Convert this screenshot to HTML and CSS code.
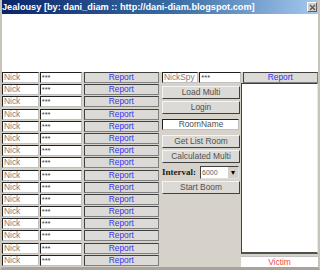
FILE: index.html
```html
<!DOCTYPE html>
<html lang="en">
<head>
    <meta charset="UTF-8">
    <title>Jealousy</title>
    <link rel="stylesheet" href="styles.css">
</head>
<body>
    <div class="window">
        <div class="titlebar">
            <span class="title">Jealousy [by: dani_diam :: http://dani-diam.blogspot.com]</span>
            <span class="close">
                <svg width="7" height="7" viewBox="0 0 7 7"><path d="M1 1L6 6M6 1L1 6" stroke="#555" stroke-width="1.2"/></svg>
            </span>
        </div>
        <div class="canvas"></div>

        <div class="main">
            <div class="accounts" id="accounts"></div>

            <div class="side">
                <div class="row">
                    <div class="field name spy">NickSpy</div>
                    <div class="field pass">***</div>
                    <div class="btn report">Report</div>
                </div>
                <div class="side-body">
                    <div class="controls">
                        <div class="btn cmd">Load Multi</div>
                        <div class="btn cmd">Login</div>
                        <div class="field room">RoomName</div>
                        <div class="btn cmd">Get List Room</div>
                        <div class="btn cmd">Calculated Multi</div>
                        <div class="interval">
                            <span class="interval-label">Interval:</span>
                            <div class="select">
                                <span class="select-value">6000</span>
                                <span class="select-arrow">&#9662;</span>
                            </div>
                        </div>
                        <div class="btn cmd">Start Boom</div>
                    </div>
                    <div class="victims">
                        <div class="list"></div>
                        <div class="victim">Victim</div>
                    </div>
                </div>
            </div>
        </div>
    </div>

    <script>
        const accounts = document.getElementById("accounts");
        for (let i = 0; i < 16; i++) {
            const row = document.createElement("div");
            row.className = "row";
            row.innerHTML = '<div class="field name">Nick</div>' +
                '<div class="field pass">***</div>' +
                '<div class="btn report">Report</div>';
            accounts.appendChild(row);
        }
    </script>
</body>
</html>
```

FILE: styles.css
```css
body {
    margin: 0;
    background: #fff;
    font-family: "Liberation Sans", Arial, sans-serif;
}
.window {
    width: 320px;
    height: 270px;
    box-sizing: border-box;
    border-left: 2px solid #c8c4bc;
    border-right: 2px solid #c8c4bc;
    border-bottom: 3px solid #a8a49c;
    background-color: #d6d2ca;
    background-image: radial-gradient(#eceae4 0.5px, transparent 0.7px);
    background-size: 2px 2px;
    overflow: hidden;
}
.titlebar {
    height: 14px;
    margin: 0 -2px;
    padding: 0 3px 0 2px;
    display: flex;
    align-items: center;
    justify-content: space-between;
    background: linear-gradient(to right, #0a246a 0%, #3a6ea5 55%, #a6caf0 100%);
}
.title {
    color: #fff;
    font-weight: bold;
    font-size: 9.2px;
    white-space: nowrap;
}
.close {
    display: flex;
    align-items: center;
    justify-content: center;
    box-sizing: border-box;
    width: 10px;
    height: 10px;
    background: #d4d0c8;
    border: 1px solid #fff;
    border-right-color: #606060;
    border-bottom-color: #606060;
}
.canvas {
    height: 58px;
    background: #fff;
}
.main {
    display: flex;
    gap: 3px;
}
.accounts {
    width: 157px;
    display: flex;
    flex-direction: column;
    gap: 1.2px;
}
.row {
    display: flex;
    height: 11px;
    gap: 1px;
}
.field {
    box-sizing: border-box;
    height: 11px;
    background: #fff;
    border-top: 1px solid #202020;
    border-left: 1px solid #202020;
    border-right: 1px solid #c0c0c0;
    border-bottom: 1px solid #c0c0c0;
    font-size: 8.4px;
    line-height: 9px;
    padding-left: 1px;
    white-space: nowrap;
    overflow: hidden;
}
.name {
    width: 37px;
    color: #808080;
}
.pass {
    width: 42px;
    color: #404040;
    font-size: 7.5px;
}
.btn {
    box-sizing: border-box;
    background-color: #dcdad6;
    background-image: radial-gradient(#f2f1ee 0.5px, transparent 0.7px);
    background-size: 2px 2px;
    border-top: 1px solid #404040;
    border-left: 1px solid #404040;
    border-right: 1px solid #808080;
    border-bottom: 1px solid #808080;
    text-align: center;
    font-size: 8.4px;
    white-space: nowrap;
}
.report {
    width: 76px;
    margin-left: 1px;
    color: #3838f0;
    line-height: 9px;
}
.side {
    width: 156px;
    display: flex;
    flex-direction: column;
}
.side .report {
    width: 77px;
}
.side-body {
    display: flex;
    gap: 1px;
}
.controls {
    width: 78px;
    display: flex;
    flex-direction: column;
    padding-top: 3px;
    gap: 2px;
}
.cmd {
    height: 13px;
    line-height: 11px;
    color: #505050;
    border-top-color: #f4f4f4;
    border-left-color: #f4f4f4;
    border-right-color: #404040;
    border-bottom-color: #404040;
}
.room {
    width: 77px;
    height: 11px;
    margin: 3px 0 3px 0;
    text-align: center;
    color: #505050;
}
.interval {
    display: flex;
    align-items: center;
    height: 14px;
}
.interval-label {
    font-family: "Liberation Serif", "Times New Roman", serif;
    font-weight: bold;
    font-size: 9px;
    color: #202020;
    width: 38px;
    white-space: nowrap;
}
.select {
    display: flex;
    box-sizing: border-box;
    width: 39px;
    height: 13px;
    background: #fff;
    border-top: 1px solid #404040;
    border-left: 1px solid #404040;
    border-right: 1px solid #e0e0e0;
    border-bottom: 1px solid #e0e0e0;
}
.select-value {
    flex: 1;
    font-size: 7px;
    line-height: 11px;
    color: #606060;
    padding-left: 1px;
}
.select-arrow {
    width: 10px;
    background: #d4d0c8;
    border-left: 1px solid #fff;
    font-size: 8px;
    line-height: 11px;
    text-align: center;
    color: #000;
}
.victims {
    width: 77px;
    display: flex;
    flex-direction: column;
}
.list {
    box-sizing: border-box;
    height: 171px;
    background: #fff;
    border-top: 1px solid #404040;
    border-left: 1px solid #404040;
    border-right: 1px solid #e8e8e8;
    border-bottom: 2px solid #505050;
}
.victim {
    box-sizing: border-box;
    height: 11px;
    margin-top: 2px;
    background: #fff;
    border-top: 1px solid #c0c0c0;
    color: #f04848;
    font-size: 8.4px;
    line-height: 10px;
    text-align: center;
}
```
